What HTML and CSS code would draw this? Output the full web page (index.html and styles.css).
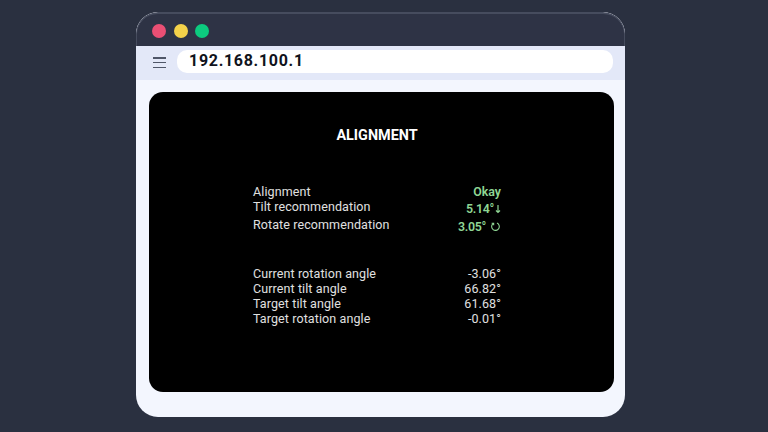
FILE: index.html
```html
<!DOCTYPE html>
<html>
<head>
    <title>Alignment</title>
    <link rel="stylesheet" href="styles.css">
</head>
<body>
    <div class="window">
        <div class="titlebar">
            <span class="dot red"></span>
            <span class="dot yellow"></span>
            <span class="dot green"></span>
        </div>
        <div class="toolbar">
            <div class="menu"><span></span><span></span><span></span></div>
            <div class="url">192.168.100.1</div>
        </div>
        <div class="screen">
            <h1>ALIGNMENT</h1>
            <div class="rows">
                <div class="row"><span>Alignment</span><b>Okay</b></div>
                <div class="row"><span>Tilt recommendation</span><b class="low">5.14°<svg class="arrow" viewBox="0 0 6 10"><path d="M3 1v7.5M1 6.5l2 2 2-2"/></svg></b></div>
                <div class="row tall"><span>Rotate recommendation</span><b class="low">3.05°<svg class="rotate" viewBox="0 0 12 12"><path d="M7.6 2.2a4.2 4.2 0 1 1-4.6 .9M1.8 2.4h2.2v2.2"/></svg></b></div>
            </div>
            <div class="rows second">
                <div class="row"><span>Current rotation angle</span><em>-3.06°</em></div>
                <div class="row"><span>Current tilt angle</span><em>66.82°</em></div>
                <div class="row"><span>Target tilt angle</span><em>61.68°</em></div>
                <div class="row"><span>Target rotation angle</span><em>-0.01°</em></div>
            </div>
        </div>
    </div>
</body>
</html>
```

FILE: styles.css
```css
html, body { margin: 0; height: 100%; }
body {
    background: #2a3040;
    padding: 12px 0 0 136px;
    box-sizing: border-box;
    font-family: Roboto, "Liberation Sans", sans-serif;
    overflow: hidden;
}
.window {
    width: 489px;
    height: 405px;
    background: #f3f6fe;
    border-radius: 22px;
    overflow: hidden;
}
.titlebar {
    height: 34px;
    box-sizing: border-box;
    background: #2e3345;
    border: solid #464c5e;
    border-width: 2px 1px 0;
    border-radius: 22px 22px 0 0;
    display: flex;
    align-items: center;
    gap: 7.5px;
    padding: 2px 0 0 15px;
}
.dot { width: 14px; height: 14px; border-radius: 50%; }
.red { background: #ea4f74; }
.yellow { background: #f4d24a; }
.green { background: #0ccb7f; }
.toolbar {
    height: 34px;
    box-sizing: border-box;
    background: #e3e8f8;
    display: flex;
    align-items: flex-start;
    padding: 4px 12px 0 17px;
}
.menu {
    width: 13px;
    height: 11px;
    margin-top: 7px;
    display: flex;
    flex-direction: column;
    justify-content: space-between;
}
.menu span { height: 1.5px; background: #4f5668; }
.url {
    flex: 1;
    margin-left: 11px;
    height: 23px;
    line-height: 22px;
    background: #fff;
    border-radius: 10px;
    padding-left: 12px;
    font-size: 16px;
    font-weight: 700;
    letter-spacing: 0.7px;
    color: #10131c;
}
.screen {
    width: 465px;
    height: 300px;
    box-sizing: border-box;
    margin: 12px 0 0 13px;
    background: #000;
    border-radius: 14px;
    padding: 35px 113px 0 104px;
    color: #e0e0e0;
}
h1 {
    margin: 0 0 39px;
    text-align: center;
    font-size: 14.4px;
    line-height: 18px;
    font-weight: 700;
    color: #fff;
}
.rows { display: flex; flex-direction: column; }
.second { margin-top: 34px; }
.row {
    display: flex;
    justify-content: space-between;
    font-size: 12.5px;
    line-height: 15px;
    letter-spacing: 0.1px;
}
.tall { margin-top: 3px; }
.row b {
    font-size: 12.4px;
    font-weight: 600;
    letter-spacing: 0;
    color: #8fd694;
    display: flex;
    align-items: center;
}
.row b.low { position: relative; top: 2px; letter-spacing: -0.3px; }
.row em { font-style: normal; font-size: 12.5px; }
.arrow, .rotate { fill: none; stroke: #8fd694; stroke-width: 1.2; }
.arrow { width: 6px; height: 10px; margin-left: 1px; }
.rotate { width: 11px; height: 11px; margin-left: 4px; }
```
